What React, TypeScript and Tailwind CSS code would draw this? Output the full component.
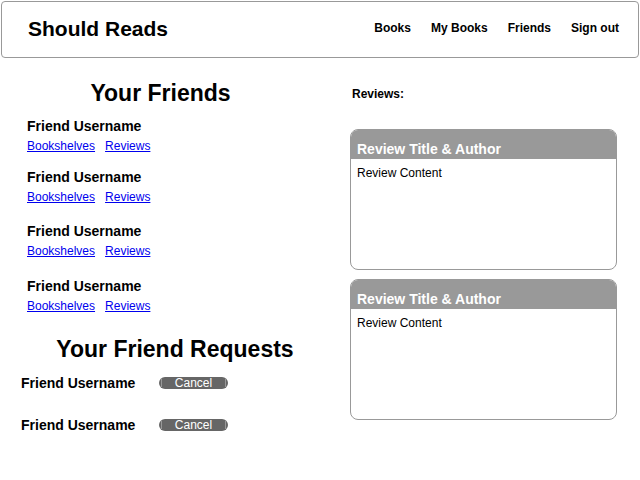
const friends = [
  { name: 'Friend Username', gap: 'mt-[9px]' },
  { name: 'Friend Username', gap: 'mt-[11px]' },
  { name: 'Friend Username', gap: 'mt-[14px]' },
  { name: 'Friend Username', gap: 'mt-[15px]' },
];

const requests = [
  { name: 'Friend Username', gap: 'mt-[10px]' },
  { name: 'Friend Username', gap: 'mt-[22px]' },
];

const reviews = [
  { title: 'Review Title & Author', body: 'Review Content', gap: 'mt-[27px]' },
  { title: 'Review Title & Author', body: 'Review Content', gap: 'mt-[9px]' },
];

export default function App() {
  return (
    <div className="min-h-[480px] bg-white text-black font-['Liberation_Sans',Arial,sans-serif]">
      {/* Top bar */}
      <header className="m-px flex h-[57px] items-center justify-between rounded-[4px] border border-[#999] pb-[2px] pl-[26px] pr-[19px]">
        <h1 className="text-[21px] font-bold leading-none">Should Reads</h1>
        <nav className="mb-[1px] flex gap-[20px] text-[12px] font-bold">
          <a href="#">Books</a>
          <a href="#">My Books</a>
          <a href="#">Friends</a>
          <a href="#">Sign out</a>
        </nav>
      </header>

      <main className="flex">
        {/* Friends column */}
        <section className="w-[350px]">
          <h2 className="mt-[20px] w-[321px] text-center text-[23px] font-bold leading-[28px]">Your Friends</h2>
          {friends.map((f, i) => (
            <div key={i} className={`${f.gap} pl-[27px]`}>
              <p className="text-[14px] font-bold leading-[20px]">{f.name}</p>
              <div className="flex gap-[10px] text-[12px] leading-[20px] text-[#0000ee]">
                <a href="#" className="underline">Bookshelves</a>
                <a href="#" className="underline">Reviews</a>
              </div>
            </div>
          ))}

          <h2 className="mt-[19px] text-center text-[23px] font-bold leading-[28px]">Your Friend Requests</h2>
          {requests.map((r, i) => (
            <div key={i} className={`${r.gap} flex items-center pl-[21px]`}>
              <p className="w-[138px] text-[14px] font-bold leading-[20px]">{r.name}</p>
              <button className="flex h-[12px] w-[69px] items-center justify-between rounded-full bg-[#666] px-[2px] text-[12px] leading-none text-white">
                <span className="h-[8px] w-px bg-[#999]" />
                Cancel
                <span className="h-[8px] w-px bg-[#999]" />
              </button>
            </div>
          ))}
        </section>

        {/* Reviews column */}
        <section className="w-[267px]">
          <p className="mt-[27px] pl-[2px] text-[12px] font-bold leading-[16px]">Reviews:</p>
          {reviews.map((r, i) => (
            <div key={i} className={`${r.gap} h-[141px] overflow-hidden rounded-[8px] border border-[#999]`}>
              <div className="h-[29px] bg-[#999] pl-[6px] pt-[11px]">
                <p className="text-[14px] font-bold leading-[16px] text-white">{r.title}</p>
              </div>
              <p className="pl-[6px] pt-[7px] text-[12px] leading-[14px]">{r.body}</p>
            </div>
          ))}
        </section>
      </main>
    </div>
  );
}
